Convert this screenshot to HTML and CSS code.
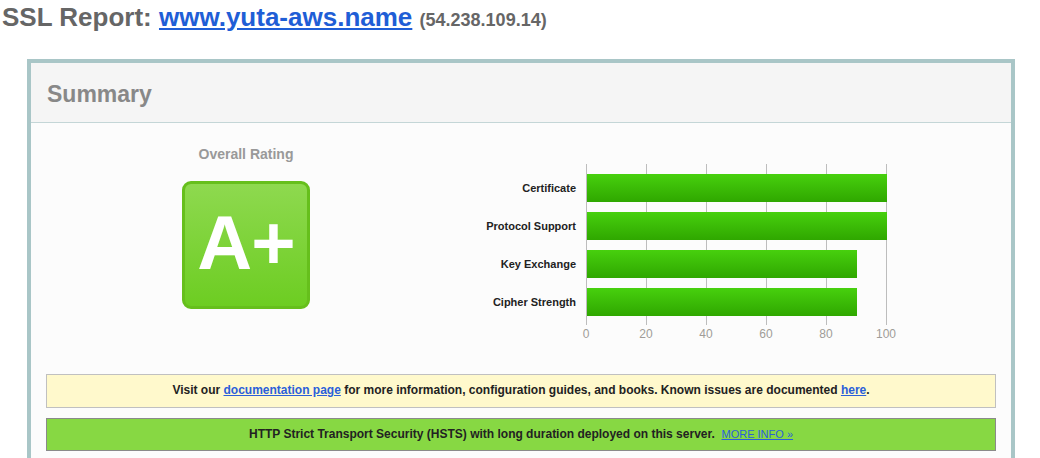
FILE: index.html
```html
<!DOCTYPE html>
<html>
<head>
<meta charset="utf-8">
<link rel="stylesheet" href="styles.css">
</head>
<body>
<h1 class="title">SSL Report: <a href="#" class="host">www.yuta-aws.name</a> <span class="ip">(54.238.109.14)</span></h1>
<div class="frame">
  <div class="frame-head">Summary</div>
  <div class="frame-body">
    <div class="summary-main">
      <div class="rating-col">
        <div class="rating-label">Overall Rating</div>
        <div class="grade">A+</div>
      </div>
      <div class="chart">
        <div class="chart-rows">
          <div class="labels">
            <div class="label">Certificate</div>
            <div class="label">Protocol Support</div>
            <div class="label">Key Exchange</div>
            <div class="label">Cipher Strength</div>
          </div>
          <div class="plot">
            <div class="bar" style="width:300px"></div>
            <div class="bar" style="width:300px"></div>
            <div class="bar" style="width:270px"></div>
            <div class="bar" style="width:270px"></div>
          </div>
        </div>
        <div class="axis">
          <span>0</span><span>20</span><span>40</span><span>60</span><span>80</span><span>100</span>
        </div>
      </div>
    </div>
    <div class="notice notice-info">Visit our <a href="#">documentation page</a> for more information, configuration guides, and books. Known issues are documented <a href="#">here</a>.</div>
    <div class="notice notice-good">HTTP Strict Transport Security (HSTS) with long duration deployed on this server. &nbsp;<a href="#" class="more">MORE INFO »</a></div>
  </div>
</div>
</body>
</html>
```
FILE: styles.css
```css
html, body {
  margin: 0;
  padding: 0;
  background: #ffffff;
  font-family: "Liberation Sans", Arial, sans-serif;
}
.title {
  margin: 0;
  padding: 3px 0 0 2px;
  height: 55px;
  box-sizing: border-box;
  font-size: 26px;
  font-weight: bold;
  color: #666666;
  line-height: 28px;
}
.host {
  color: #1f5ed6;
  text-decoration: underline;
}
.ip {
  font-size: 18px;
  color: #666666;
}
.frame {
  margin: 4px 0 0 27px;
  width: 988px;
  box-sizing: border-box;
  border: 4px solid #a9c6c7;
  border-bottom: none;
  height: 400px;
  background: #fcfcfc;
}
.frame-head {
  height: 59px;
  border-bottom: 1px solid #c4d6d7;
  background: #f5f5f5;
  font-size: 23px;
  font-weight: bold;
  color: #888888;
  line-height: 62px;
  padding-left: 16px;
}
.frame-body {
  padding: 0 15px;
}
.summary-main {
  display: flex;
  height: 251px;
  margin: 0 -15px;
}
.rating-col {
  width: 430px;
  display: flex;
  flex-direction: column;
  align-items: center;
}
.rating-label {
  margin-top: 23px;
  font-size: 14px;
  font-weight: bold;
  color: #999999;
  line-height: 17px;
}
.grade {
  margin-top: 18px;
  width: 128px;
  height: 128px;
  box-sizing: border-box;
  border: 3px solid #66bf1c;
  border-radius: 9px;
  background: linear-gradient(#8ed94f, #6dcd22);
  color: #ffffff;
  font-size: 76px;
  font-weight: bold;
  line-height: 118px;
  text-align: center;
  letter-spacing: -1px;
}
.chart {
  margin-top: 41px;
}
.chart-rows {
  display: flex;
}
.labels {
  width: 115px;
  margin-right: 10px;
  padding-top: 10px;
  display: flex;
  flex-direction: column;
  gap: 10px;
}
.label {
  height: 28px;
  line-height: 28px;
  text-align: right;
  font-size: 11px;
  font-weight: bold;
  color: #222222;
  white-space: nowrap;
}
.plot {
  width: 301px;
  height: 161px;
  box-sizing: border-box;
  padding-top: 10px;
  display: flex;
  flex-direction: column;
  gap: 10px;
  background: repeating-linear-gradient(to right, #bdbdbd 0, #bdbdbd 1px, transparent 1px, transparent 60px);
}
.bar {
  height: 28px;
  margin-left: 1px;
  background: linear-gradient(#47d00e, #2fa700);
}
.axis {
  display: flex;
  margin-left: 95px;
  margin-top: 2px;
}
.axis span {
  width: 60px;
  text-align: center;
  font-size: 12px;
  color: #a09c98;
  line-height: 14px;
}
.notice {
  box-sizing: border-box;
  height: 34px;
  line-height: 31px;
  text-align: center;
  font-size: 12px;
  font-weight: bold;
  color: #222222;
}
.notice a {
  color: #2b5fd9;
}
.notice-info {
  background: #fff9cc;
  border: 1px solid #c0c0c0;
}
.notice-good {
  margin-top: 10px;
  height: 33px;
  line-height: 31px;
  background: #87d843;
  border: 1px solid #8a8a8a;
}
.more {
  font-size: 11px;
  font-weight: normal;
}
```
